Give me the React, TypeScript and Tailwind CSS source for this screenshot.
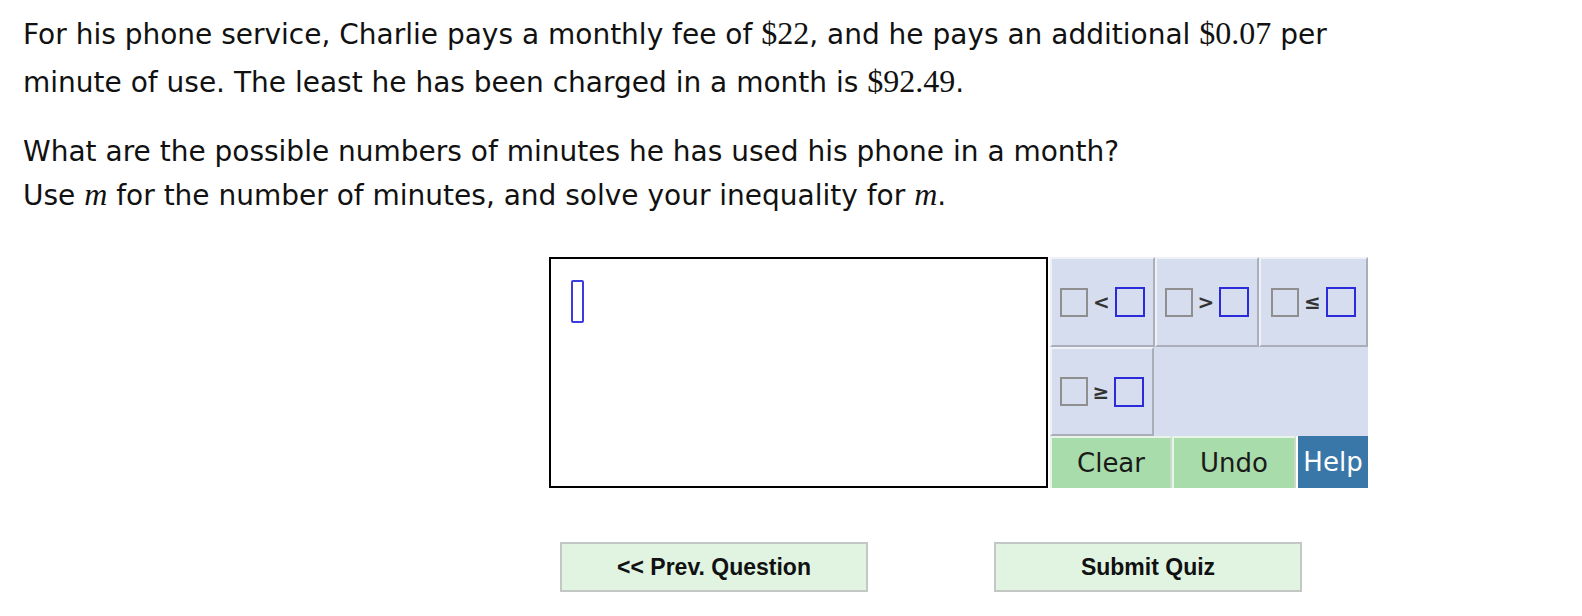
const sans = "font-['DejaVu_Sans',sans-serif]";
const num = "font-['Liberation_Serif',serif] text-[32px]";

function Op({ sym }: { sym: string }) {
  return (
    <div className="flex items-center justify-center gap-[5px] bg-[#d5ddef] border-t-2 border-l-2 border-t-[#eef1f8] border-l-[#eef1f8] border-r-2 border-b-2 border-r-[#a9aeb8] border-b-[#a9aeb8]">
      <span className="block w-[28px] h-[29px] border-2 border-[#8f8f8f]" />
      <span className="text-[20px] leading-none text-[#333] font-['DejaVu_Sans',sans-serif] font-bold">{sym}</span>
      <span className="block w-[30px] h-[30px] border-2 border-[#2b2bdc]" />
    </div>
  );
}

export default function App() {
  return (
    <div className={`min-h-screen bg-white text-[#111] ${sans}`}>
      <div className="pl-[23px] pt-[10px]">
        <p className="text-[28px] leading-[47px]">
          For his phone service, Charlie pays a monthly fee of <span className={num}>$22</span>, and he pays an additional{" "}
          <span className={num}>$0.07</span> per
          <br />
          minute of use. The least he has been charged in a month is <span className={num}>$92.49</span>.
        </p>
        <p className="mt-[24px] text-[28px] leading-[43px]">
          What are the possible numbers of minutes he has used his phone in a month?
          <br />
          Use <i className={num}>m</i> for the number of minutes, and solve your inequality for <i className={num}>m</i>.
        </p>
      </div>

      <div className="mt-[40px] ml-[549px] flex gap-[2px]">
        <div className="w-[499px] h-[231px] border-2 border-black bg-white pl-[20px] pt-[21px]">
          <div className="w-[13px] h-[43px] border-2 border-[#3b3be0] rounded-[2px]" />
        </div>
        <div className="w-[318px] h-[231px] grid grid-rows-[90px_89px_52px] bg-[#d5ddef]">
          <div className="grid grid-cols-[105px_104px_109px]">
            <Op sym="<" />
            <Op sym=">" />
            <Op sym="≤" />
          </div>
          <div className="grid grid-cols-[104px_1fr]">
            <Op sym="≥" />
            <div />
          </div>
          <div className="grid grid-cols-[122px_124px_72px] text-[26px]">
            <button className="bg-[#a9dcab] border-t-2 border-l-2 border-[#e8f4e8] border-r-2 border-r-[#c8dcc8] text-[#1a1a1a] leading-none">Clear</button>
            <button className="bg-[#a9dcab] border-t-2 border-l-2 border-[#e8f4e8] border-r-2 border-r-[#c8dcc8] text-[#1a1a1a] leading-none">Undo</button>
            <button className="bg-[#3a77a9] text-white leading-none border-l-2 border-white">Help</button>
          </div>
        </div>
      </div>

      <div className="mt-[54px] ml-[560px] flex gap-[126px] font-['Liberation_Sans',Arial,sans-serif] font-bold text-[23px]">
        <button className="w-[308px] h-[50px] bg-[#e0f4e1] border-2 border-[#c4c8c4] text-[#111]">&lt;&lt; Prev. Question</button>
        <button className="w-[308px] h-[50px] bg-[#e0f4e1] border-2 border-[#c4c8c4] text-[#111]">Submit Quiz</button>
      </div>
    </div>
  );
}
